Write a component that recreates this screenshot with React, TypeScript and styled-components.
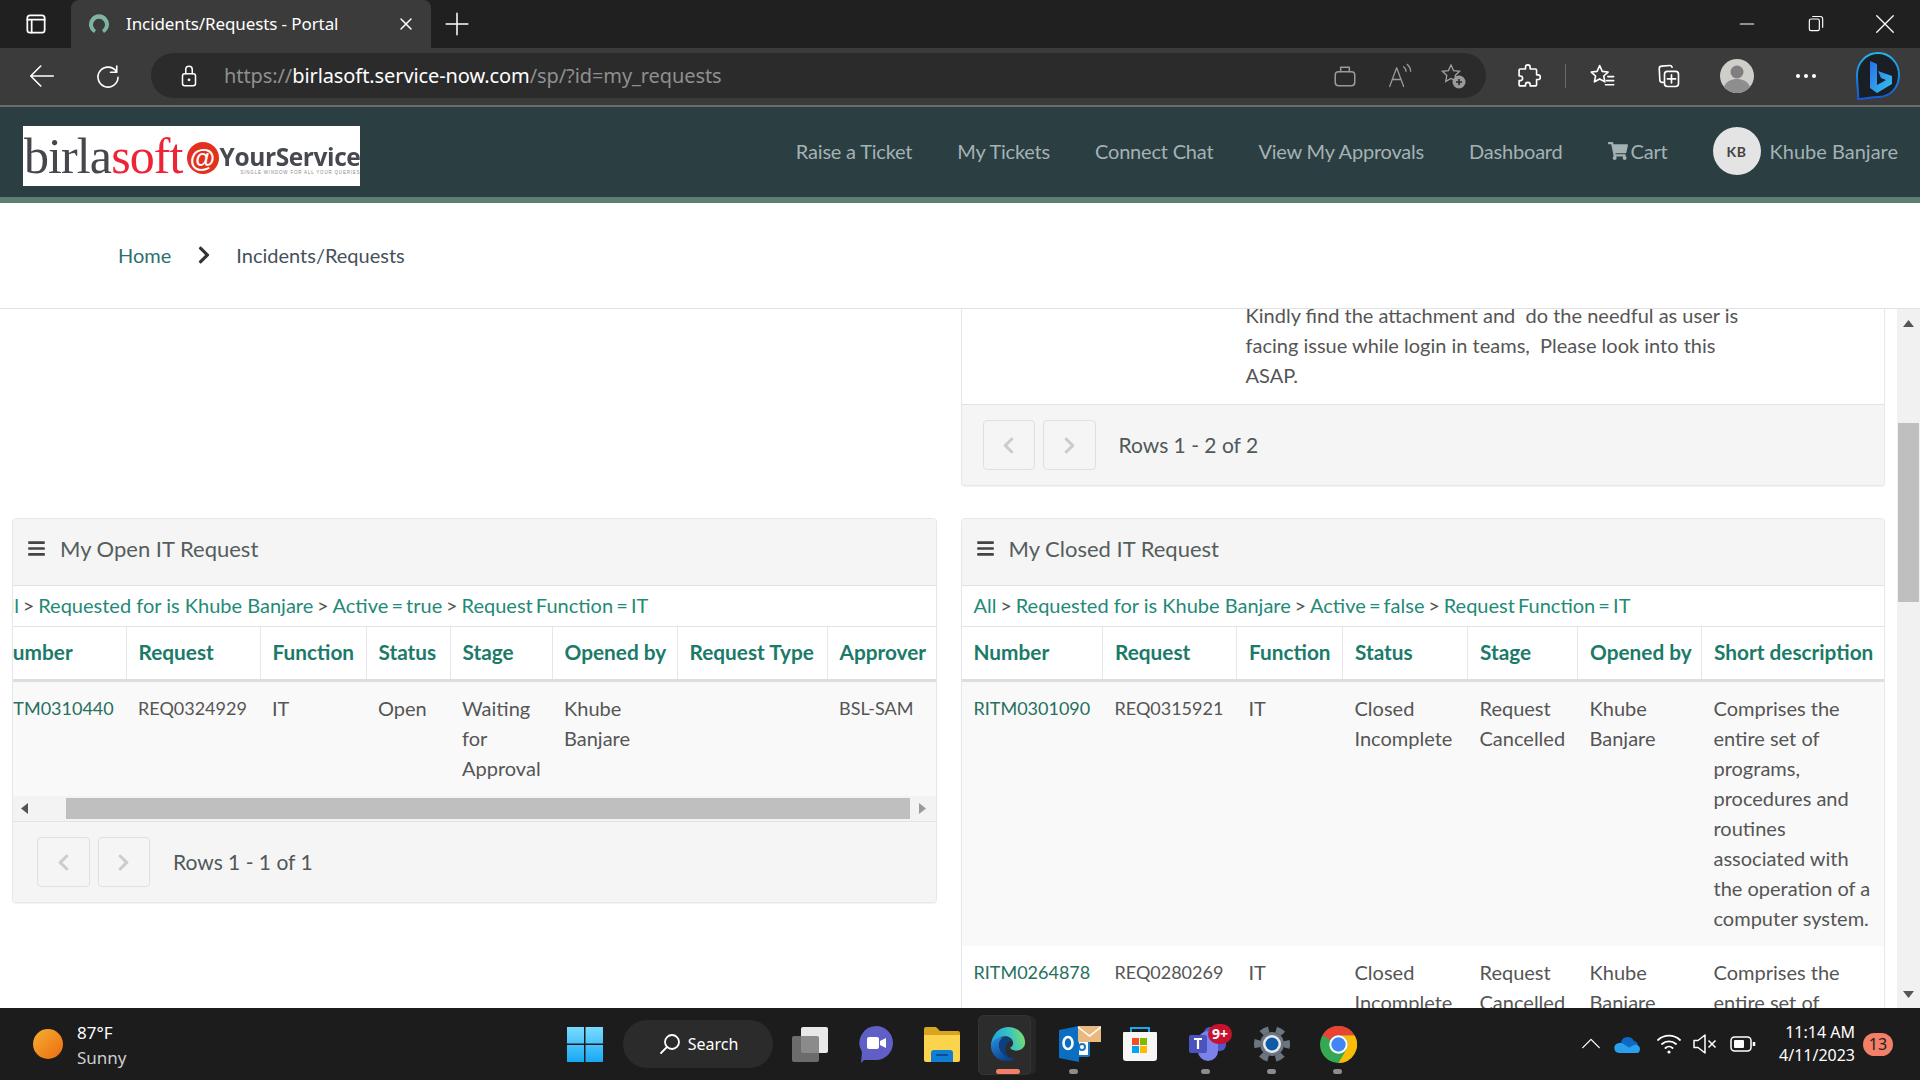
import React, { FC, ReactNode } from 'react';
import styled, { createGlobalStyle } from 'styled-components';
import { FaBars, FaChevronLeft, FaChevronRight, FaShoppingCart } from 'react-icons/fa';

const PAGE_FONT = '"Lato", "Noto Sans", sans-serif';
const UI_FONT = '"Noto Sans", "Open Sans", sans-serif';

const GlobalStyle = createGlobalStyle`
  html, body {
    margin: 0;
    height: 100%;
    overflow: hidden;
    background: #fff;
  }
  * { box-sizing: border-box; }
`;

const Styled = {
  App: styled.div`
    display: flex;
    flex-direction: column;
    width: 1920px;
    height: 1080px;
    overflow: hidden;
    font-family: ${PAGE_FONT};
    color: #545c5c;
  `,
  TabBar: styled.div`
    display: flex;
    align-items: stretch;
    flex: 0 0 48px;
    background: #202020;
    color: #fff;
    font-family: ${UI_FONT};
  `,
  TabSlot: styled.div<{ $w: number }>`
    display: flex;
    align-items: center;
    justify-content: center;
    flex: 0 0 ${(p) => p.$w}px;
  `,
  Tab: styled.div`
    display: flex;
    align-items: center;
    flex: 0 0 360px;
    padding: 0 15px 0 16px;
    background: #3b3b3b;
    border-radius: 8px 8px 0 0;
  `,
  TabTitle: styled.span`
    flex: 1;
    margin: 0 0 2px 15px;
    font-size: 17px;
    letter-spacing: -0.1px;
    white-space: nowrap;
  `,
  Spacer: styled.div`
    flex: 1;
  `,
  Toolbar: styled.div`
    display: flex;
    align-items: center;
    flex: 0 0 59px;
    padding: 0 0 2px 9px;
    background: #3b3b3b;
    border-bottom: 2px solid #6b6b6b;
  `,
  ToolSlot: styled.div<{ $w: number }>`
    display: flex;
    align-items: center;
    justify-content: center;
    flex: 0 0 ${(p) => p.$w}px;
    height: 45px;
  `,
  AddressBar: styled.div`
    display: flex;
    align-items: center;
    flex: 0 0 1335px;
    height: 45px;
    margin: 0 10px;
    padding: 0 6px 0 22px;
    background: #2b2b2b;
    border-radius: 23px;
  `,
  Url: styled.div`
    flex: 1;
    margin-left: 19px;
    font-family: ${UI_FONT};
    font-size: 20px;
    letter-spacing: -0.09px;
    color: #8f8f8f;
    white-space: nowrap;
    b {
      font-weight: 400;
      color: #fff;
    }
  `,
  Divider: styled.div`
    width: 1px;
    height: 24px;
    background: #6a6a6a;
  `,
  Header: styled.header`
    display: flex;
    align-items: center;
    justify-content: space-between;
    flex: 0 0 96px;
    padding: 0 22px 0 23px;
    background: #2b3e42;
    border-bottom: 6px solid #5b7f71;
  `,
  Logo: styled.div`
    display: flex;
    align-items: center;
    width: 337px;
    height: 60px;
    margin-top: 8px;
    padding-left: 1px;
    background: #fff;
    overflow: hidden;
  `,
  LogoWord: styled.span<{ $c: string }>`
    font-family: 'Liberation Serif', serif;
    font-size: 50px;
    line-height: 50px;
    letter-spacing: -0.9px;
    color: ${(p) => p.$c};
    filter: blur(0.3px);
  `,
  LogoAt: styled.span`
    display: flex;
    align-items: center;
    justify-content: center;
    flex: 0 0 32px;
    height: 32px;
    margin: 4px 1px 0 4px;
    border-radius: 50%;
    background: #e2321f;
    color: #fff;
    font-family: 'Liberation Sans', sans-serif;
    font-size: 26px;
    font-weight: 700;
    line-height: 1;
  `,
  LogoRight: styled.div`
    display: flex;
    flex-direction: column;
    align-items: flex-end;
    margin-top: 6px;
  `,
  LogoService: styled.span`
    font-family: 'Open Sans', sans-serif;
    font-size: 24.5px;
    font-weight: 700;
    line-height: 26px;
    letter-spacing: -0.4px;
    color: #46494f;
    white-space: nowrap;
    filter: blur(0.3px);
  `,
  LogoTag: styled.span`
    font-family: 'Liberation Sans', sans-serif;
    font-size: 4.5px;
    line-height: 5px;
    letter-spacing: 0.8px;
    color: #8a8a8a;
    white-space: nowrap;
  `,
  Nav: styled.nav`
    display: flex;
    align-items: center;
    gap: 45px;
    margin-bottom: 2px;
    font-size: 20px;
    letter-spacing: -0.2px;
    color: #a4b2b4;
  `,
  NavLink: styled.a`
    display: flex;
    align-items: center;
    gap: 3px;
    white-space: nowrap;
  `,
  User: styled.div`
    display: flex;
    align-items: center;
    gap: 9px;
    letter-spacing: 0;
    white-space: nowrap;
  `,
  Avatar: styled.span`
    display: flex;
    align-items: center;
    justify-content: center;
    width: 48px;
    height: 48px;
    border-radius: 50%;
    background: #e4e4e4;
    color: #444;
    font-size: 14px;
    font-weight: 700;
    letter-spacing: 0.5px;
  `,
  Crumbs: styled.div`
    display: flex;
    align-items: center;
    flex: 0 0 106px;
    padding: 0 0 1px 118px;
    border-bottom: 1px solid #e2e2e2;
    font-size: 20px;
  `,
  CrumbHome: styled.a`
    color: #2c6f72;
  `,
  CrumbArrow: styled.span`
    display: flex;
    justify-content: center;
    width: 65px;
    color: #333;
    font-size: 20px;
  `,
  CrumbCurrent: styled.span`
    color: #46505a;
  `,
  Main: styled.main`
    display: flex;
    flex: 1;
    min-height: 0;
  `,
  Scroll: styled.div`
    display: grid;
    grid-template-columns: minmax(0, 1fr) minmax(0, 1fr);
    column-gap: 24px;
    align-items: start;
    flex: 1;
    padding: 0 12px 0 12px;
    overflow: hidden;
  `,
  LeftColumn: styled.div`
    padding-top: 209px;
  `,
  RightColumn: styled.div`
    display: flex;
    flex-direction: column;
    gap: 32px;
  `,
  Panel: styled.section<{ $cut?: boolean }>`
    border: 1px solid #e4e8e7;
    border-top-width: ${(p) => (p.$cut ? 0 : 1)}px;
    border-radius: ${(p) => (p.$cut ? '0 0 4px 4px' : '4px')};
    box-shadow: 0 1px 1px rgba(0, 0, 0, 0.05);
    background: #fff;
    overflow: hidden;
  `,
  PanelHead: styled.div`
    display: flex;
    align-items: center;
    gap: 14px;
    height: 67px;
    padding: 0 0 7px 14px;
    background: #f5f5f5;
    border-bottom: 1px solid #e2e4e4;
    font-size: 22px;
    color: #555d5d;
    svg {
      color: #444;
      font-size: 19px;
    }
  `,
  Filter: styled.div<{ $scrolled?: boolean }>`
    height: 40px;
    padding-left: 12px;
    margin-left: ${(p) => (p.$scrolled ? -29 : 0)}px;
    font-size: 20px;
    line-height: 38px;
    white-space: pre;
    word-spacing: -1.3px;
    color: #555;
    a {
      color: #1f8a76;
      word-spacing: 0;
    }
    a:nth-of-type(n + 3) {
      word-spacing: -2px;
    }
  `,
  TableClip: styled.div`
    overflow: hidden;
  `,
  Table: styled.table<{ $width: number; $scrolled?: boolean }>`
    table-layout: fixed;
    width: ${(p) => p.$width}px;
    border-collapse: collapse;
    margin-left: ${(p) => (p.$scrolled ? -28 : 0)}px;
  `,
  Th: styled.th<{ $w: number }>`
    width: ${(p) => p.$w}px;
    height: 54px;
    padding: 0 0 3px 12px;
    border-top: 1px solid #e2e4e4;
    border-left: 1px solid #e6e8e8;
    border-bottom: 3px solid #dedede;
    font-size: 20.8px;
    font-weight: 700;
    text-align: left;
    white-space: nowrap;
    color: #1c7a68;
    &:first-child {
      border-left: 0;
    }
  `,
  Row: styled.tr<{ $odd?: boolean }>`
    background: ${(p) => (p.$odd ? '#f9f9f9' : '#fff')};
    & + & td {
      border-top: 2px solid #e4e4e4;
    }
  `,
  Td: styled.td<{ $code?: boolean }>`
    padding: 11px 6px 13px 12px;
    vertical-align: top;
    font-size: ${(p) => (p.$code ? 18 : 20)}px;
    line-height: 30px;
    white-space: ${(p) => (p.$code ? 'nowrap' : 'normal')};
    color: #555;
    a {
      color: #26705f;
    }
  `,
  HScroll: styled.div`
    display: flex;
    align-items: center;
    height: 25px;
    padding: 2px 0;
    background: #f3f3f3;
  `,
  HArrow: styled.span<{ $w: number; $right?: boolean }>`
    display: flex;
    justify-content: center;
    flex: 0 0 ${(p) => p.$w}px;
    padding-right: ${(p) => (p.$right ? 0 : 30)}px;
  `,
  HThumb: styled.div`
    flex: 1;
    height: 21px;
    background: #bfbfbf;
  `,
  Footer: styled.div<{ $inset: number }>`
    display: flex;
    align-items: center;
    gap: 8px;
    height: 81px;
    padding: 0 0 0 ${(p) => p.$inset}px;
    background: #f5f5f5;
    border-top: 1px solid #e2e4e4;
  `,
  PageButton: styled.span`
    display: flex;
    align-items: center;
    justify-content: center;
    width: 52.5px;
    height: 50px;
    border: 1px solid #e0e0e0;
    border-radius: 4px;
    color: #ccc;
    font-size: 19px;
  `,
  Rows: styled.span`
    margin: 0 0 2px 15px;
    font-size: 21px;
    color: #50585a;
  `,
  Description: styled.div`
    height: 95px;
    overflow: hidden;
  `,
  DescriptionText: styled.p`
    margin: -9px 0 0 284px;
    font-size: 20px;
    line-height: 30px;
    color: #555;
    white-space: pre;
  `,
  VScroll: styled.div`
    display: flex;
    flex-direction: column;
    align-items: center;
    flex: 0 0 23px;
    background: #f1f1f1;
  `,
  VArrow: styled.div`
    display: flex;
    align-items: center;
    justify-content: center;
    flex: 0 0 28px;
  `,
  VThumb: styled.div`
    width: 21px;
    height: 179px;
    margin-top: 86px;
    background: #bfbfbf;
  `,
  VGap: styled.div`
    flex: 1;
  `,
  Taskbar: styled.footer`
    display: flex;
    align-items: center;
    flex: 0 0 72px;
    background: #1c1c1c;
    color: #fff;
    font-family: ${UI_FONT};
  `,
  Weather: styled.div`
    display: flex;
    align-items: center;
    gap: 14px;
    flex: 0 0 552px;
    padding-left: 33px;
  `,
  Sun: styled.span`
    width: 30px;
    height: 30px;
    border-radius: 50%;
    background: linear-gradient(135deg, #f2b133, #f0690f);
  `,
  WeatherText: styled.div`
    padding-top: 2px;
    font-size: 17px;
    line-height: 25px;
    color: #fff;
    span {
      display: block;
      color: #cfcfcf;
    }
  `,
  Search: styled.div`
    display: flex;
    align-items: center;
    justify-content: center;
    gap: 6px;
    flex: 0 0 150px;
    height: 48px;
    margin: 0 4px 0 5px;
    border-radius: 24px;
    background: #2b2b2b;
    font-size: 16px;
  `,
  TaskSlot: styled.div<{ $active?: boolean; $dot?: boolean; $shift?: number }>`
    position: relative;
    display: flex;
    align-items: center;
    justify-content: center;
    flex: 0 0 66px;
    height: 72px;
    padding-left: ${(p) => p.$shift || 0}px;
    &:before {
      content: '';
      display: ${(p) => (p.$active ? 'block' : 'none')};
      position: absolute;
      top: 7px;
      left: 3px;
      width: 53px;
      height: 60px;
      border-radius: 6px;
      background: #2c2c2c;
      box-shadow: inset 0 0 0 1px #333, 6px 0 0 -1px #262626;
    }
    &:after {
      content: '';
      display: ${(p) => (p.$active || p.$dot ? 'block' : 'none')};
      position: absolute;
      left: ${(p) => (p.$active ? 21 : 28)}px;
      bottom: 6px;
      width: ${(p) => (p.$active ? 24 : 9)}px;
      height: 5px;
      border-radius: 3px;
      background: ${(p) => (p.$active ? '#f27f66' : '#8c8c8c')};
    }
    svg {
      position: relative;
      z-index: 1;
    }
  `,
  TeamsBadge: styled.span`
    position: absolute;
    top: 16px;
    right: 7px;
    z-index: 2;
    display: flex;
    align-items: center;
    justify-content: center;
    width: 24px;
    height: 20px;
    border-radius: 10px;
    background: #c4122f;
    font-size: 14px;
    font-weight: 700;
    line-height: 1;
  `,
  Tray: styled.div`
    display: flex;
    align-items: center;
    margin-left: auto;
    padding-right: 27px;
  `,
  TraySlot: styled.div<{ $w: number }>`
    display: flex;
    align-items: center;
    justify-content: center;
    flex: 0 0 ${(p) => p.$w}px;
  `,
  Clock: styled.div`
    flex: 0 0 86px;
    font-size: 16px;
    line-height: 23px;
    text-align: right;
    white-space: nowrap;
  `,
  Badge: styled.span`
    display: flex;
    align-items: center;
    justify-content: center;
    width: 30px;
    height: 23px;
    margin-left: 8px;
    border-radius: 12px;
    background: #f27f66;
    color: #222;
    font-size: 16px;
  `,
};

const Stroke: FC<{ size?: number; color?: string; children: ReactNode }> = ({ size = 24, color = '#fff', children }) => (
  <svg width={size} height={size} viewBox="0 0 24 24" fill="none" stroke={color} strokeWidth={1.4} strokeLinecap="round" strokeLinejoin="round">
    {children}
  </svg>
);

const STAR = 'M12 3l2.6 5.6 6 .7-4.4 4.1 1.1 6L12 16.5 6.700 19.400l1.100-6L3.400 9.300l6-.7z';

const EdgeIcon: FC = () => (
  <svg width="38" height="38" viewBox="0 0 40 40">
    <defs>
      <linearGradient id="edgeTop" x1="0" y1="0.6" x2="1" y2="0.4">
        <stop offset="0" stopColor="#1f9fd8" />
        <stop offset="0.55" stopColor="#35c1c8" />
        <stop offset="1" stopColor="#78e06a" />
      </linearGradient>
      <linearGradient id="edgeLow" x1="0" y1="0" x2="0.6" y2="1">
        <stop offset="0" stopColor="#2a8fe0" />
        <stop offset="1" stopColor="#0b3f8a" />
      </linearGradient>
    </defs>
    <path d="M20 2C30 2 38 9.500 38 18.500 38 24 33.500 27 28.500 27 25.500 27 22.500 25.800 22.500 23.500 25 22.500 26 20 25 17 23 12 17 10.500 12 13 7 15.500 3.500 19 2 22 2.500 11 10 2 20 2Z" fill="url(#edgeTop)" />
    <path d="M2 22C4 16 9 12.500 15.500 13 11.500 15 10 19 11 24 12.500 31 20 36 27.500 34.500 25 37 22 38 19 38 9.500 38 2 31 2 22Z" fill="url(#edgeLow)" />
    <path d="M15.500 13C11.500 15 10 19 11 24 12 29 16 33 21 34.500 17 30 16.500 25 18 21.500 19 19 21 16.500 25 17 23 13.500 19.500 12.500 15.500 13Z" fill="#0e3f82" />
  </svg>
);

const OutlookIcon: FC = () => (
  <svg width="44" height="36" viewBox="0 0 44 36">
    <rect x="18" y="14" width="14" height="16" rx="1" fill="#fff" stroke="#1a77c4" strokeWidth="2" />
    <circle cx="25" cy="21" r="3" fill="none" stroke="#1a77c4" strokeWidth="2" />
    <path d="M2 4l20-4v36L2 32z" fill="#0a6fc2" />
    <ellipse cx="11" cy="17" rx="4.500" ry="6" fill="none" stroke="#fff" strokeWidth="2.600" />
    <rect x="21" y="0" width="23" height="16" fill="#e9b97f" />
    <path d="M21 1l11.500 9L44 1" fill="none" stroke="#fff" strokeWidth="1.500" />
  </svg>
);

const StoreIcon: FC = () => (
  <svg width="36" height="36" viewBox="0 0 36 36">
    <path d="M9 7V2h18v5" fill="none" stroke="#1aa9e8" strokeWidth="2" />
    <path d="M2 6h32a1 1 0 0 1 1 1v25a3 3 0 0 1-3 3H4a3 3 0 0 1-3-3V7a1 1 0 0 1 1-1z" fill="#f6f6f6" />
    <rect x="10" y="12" width="7" height="7" fill="#f25022" />
    <rect x="18" y="12" width="7" height="7" fill="#7fba00" />
    <rect x="10" y="20" width="7" height="7" fill="#00a4ef" />
    <rect x="18" y="20" width="7" height="7" fill="#ffb900" />
  </svg>
);

const TeamsIcon: FC = () => (
  <svg width="40" height="38" viewBox="0 0 40 38">
    <rect x="16" y="2" width="22" height="24" rx="6" fill="#5059c9" />
    <rect x="10" y="6" width="20" height="30" rx="10" fill="#7b83eb" />
    <rect x="1" y="10" width="18" height="18" rx="2" fill="#4b53bc" />
    <path d="M6 14h8M10 14v10" stroke="#fff" strokeWidth="2.200" fill="none" />
  </svg>
);

const GearIcon: FC = () => (
  <svg width="38" height="38" viewBox="0 0 38 38">
    <circle cx="19" cy="19" r="12" fill="#6c7680" />
    <circle cx="19" cy="19" r="15" fill="none" stroke="#6c7680" strokeWidth="6" strokeDasharray="8 7.700" strokeDashoffset="4" />
    <circle cx="19" cy="19" r="9" fill="#e8eaec" />
    <circle cx="19" cy="19" r="6.500" fill="#0f5ba8" />
  </svg>
);

const ChromeIcon: FC = () => (
  <svg width="37" height="37" viewBox="6 6 36 36">
    <circle cx="24" cy="24" r="18" fill="#34a853" />
    <path d="M39.600 15A18 18 0 0 1 24 42l7.800-13.500A9 9 0 0 0 24 15z" fill="#fbbc05" />
    <path d="M8.400 15a18 18 0 0 1 31.200 0H24a9 9 0 0 0-7.800 4.500z" fill="#ea4335" />
    <circle cx="24" cy="24" r="9" fill="#fff" />
    <circle cx="24" cy="24" r="7" fill="#4285f4" />
  </svg>
);

const BingIcon: FC = () => (
  <svg width="46" height="50" viewBox="0 0 46 50">
    <defs>
      <linearGradient id="bingRing" x1="0.500" y1="0" x2="0.500" y2="1">
        <stop offset="0" stopColor="#22b8e8" />
        <stop offset="1" stopColor="#1358d8" />
      </linearGradient>
      <linearGradient id="bingB" x1="0" y1="0" x2="1" y2="1">
        <stop offset="0" stopColor="#2a6fe8" />
        <stop offset="1" stopColor="#36c3ee" />
      </linearGradient>
    </defs>
    <path d="M23 2C34 2 44 11 44 24 44 37 35 46 23 46 16 46 10 48 3 48 4 44 2 38 2 24 2 11 12 2 23 2Z" fill="#1a1f26" stroke="url(#bingRing)" strokeWidth="2" />
    <path d="M15 10l7 3v21l9-5-5-2-3-7 14 5v8L22 42l-7-5z" fill="url(#bingB)" />
  </svg>
);

const OpenColumns = [
  { title: 'Number', w: 141 },
  { title: 'Request', w: 134 },
  { title: 'Function', w: 106 },
  { title: 'Status', w: 84 },
  { title: 'Stage', w: 102 },
  { title: 'Opened by', w: 125 },
  { title: 'Request Type', w: 150 },
  { title: 'Approver', w: 111 },
];

const ClosedColumns = [
  { title: 'Number', w: 141 },
  { title: 'Request', w: 134 },
  { title: 'Function', w: 106 },
  { title: 'Status', w: 125 },
  { title: 'Stage', w: 110 },
  { title: 'Opened by', w: 124 },
  { title: 'Short description', w: 183 },
];

const DESCRIPTION = 'Comprises the entire set of programs, procedures and routines associated with the operation of a computer system.';

const ClosedRows = [
  { number: 'RITM0301090', request: 'REQ0315921' },
  { number: 'RITM0264878', request: 'REQ0280269' },
];

const Pager: FC<{ label: string; inset: number }> = ({ label, inset }) => (
  <Styled.Footer $inset={inset}>
    <Styled.PageButton>
      <FaChevronLeft />
    </Styled.PageButton>
    <Styled.PageButton>
      <FaChevronRight />
    </Styled.PageButton>
    <Styled.Rows>{label}</Styled.Rows>
  </Styled.Footer>
);

const BrowserChrome: FC = () => (
  <>
    <Styled.TabBar>
      <Styled.TabSlot $w={71}>
        <Stroke size={26}>
          <rect x="4" y="4" width="16" height="16" rx="2.500" strokeWidth="1.600" />
          <path d="M4 8h16M8 8v12" strokeWidth="1.600" />
        </Stroke>
      </Styled.TabSlot>
      <Styled.Tab>
        <svg width="24" height="24" viewBox="0 0 24 24">
          <path d="M7 21A10 10 0 1 1 17 21L15 18A6 6 0 1 0 9 18Z" fill="#7db5a0" />
        </svg>
        <Styled.TabTitle>Incidents/Requests - Portal</Styled.TabTitle>
        <Stroke size={20}>
          <path d="M6 6l12 12M18 6L6 18" strokeWidth="1.800" />
        </Stroke>
      </Styled.Tab>
      <Styled.TabSlot $w={52}>
        <Stroke size={26}>
          <path d="M12 2v20M2 12h20" />
        </Stroke>
      </Styled.TabSlot>
      <Styled.Spacer />
      <Styled.TabSlot $w={69}>
        <Stroke size={20}>
          <path d="M4 12h16" />
        </Stroke>
      </Styled.TabSlot>
      <Styled.TabSlot $w={69}>
        <Stroke size={20}>
          <rect x="4" y="6" width="12" height="14" rx="2" />
          <path d="M8 3h9a3 3 0 0 1 3 3v10" />
        </Stroke>
      </Styled.TabSlot>
      <Styled.TabSlot $w={70}>
        <Stroke size={22}>
          <path d="M3 3l18 18M21 3L3 21" />
        </Stroke>
      </Styled.TabSlot>
    </Styled.TabBar>
    <Styled.Toolbar>
      <Styled.ToolSlot $w={66}>
        <Stroke size={30}>
          <path d="M21 12H3M11 4l-8 8 8 8" strokeWidth="1.300" />
        </Stroke>
      </Styled.ToolSlot>
      <Styled.ToolSlot $w={66}>
        <Stroke size={30}>
          <path d="M19 4v5h-5M19 9a8 8 0 1 0 1 4" strokeWidth="1.300" />
        </Stroke>
      </Styled.ToolSlot>
      <Styled.AddressBar>
        <Styled.ToolSlot $w={32}>
          <Stroke size={26}>
            <rect x="6" y="10" width="12" height="11" rx="2" />
            <path d="M9 10V6a3 3 0 0 1 6 0v4" />
            <circle cx="12" cy="15.500" r="0.600" fill="#fff" />
          </Stroke>
        </Styled.ToolSlot>
        <Styled.Url>
          https://<b>birlasoft.service-now.com</b>/sp/?id=my_requests
        </Styled.Url>
        <Styled.ToolSlot $w={54}>
          <Stroke size={26} color="#9a9a9a">
            <rect x="3" y="8" width="18" height="13" rx="3" />
            <path d="M8 8V4h8v4" />
          </Stroke>
        </Styled.ToolSlot>
        <Styled.ToolSlot $w={54}>
          <Stroke size={28} color="#9a9a9a">
            <path d="M4 21l6-16 6 16M6.500 15h7M16 4c1.500 1.200 2 2.600 2 4M19 2c2 1.800 3 3.800 3 6" strokeWidth="1.100" />
          </Stroke>
        </Styled.ToolSlot>
        <Styled.ToolSlot $w={54}>
          <svg width="28" height="28" viewBox="0 0 28 28" fill="none">
            <path d={STAR} stroke="#a0a0a0" strokeWidth="1.300" />
            <circle cx="20" cy="20" r="6.500" fill="#9a9a9a" />
            <path d="M20 17v6M17 20h6" stroke="#2b2b2b" strokeWidth="1.600" />
          </svg>
        </Styled.ToolSlot>
      </Styled.AddressBar>
      <Styled.ToolSlot $w={66}>
        <Stroke size={28}>
          <path d="M9 4.500C9 3 10 2.500 11 2.500s2 .8 2 2V6h4.500a1 1 0 0 1 1 1v4h1.200c1.300 0 2 1 2 2s-.8 2-2 2h-1.200v4.500a1 1 0 0 1-1 1H13v-1c0-1.300-1-2-2-2s-2 .8-2 2v1H4.500a1 1 0 0 1-1-1V16h1c1.300 0 2-1 2-2s-.8-2-2-2h-1V7a1 1 0 0 1 1-1H9z" />
        </Stroke>
      </Styled.ToolSlot>
      <Styled.ToolSlot $w={7}>
        <Styled.Divider />
      </Styled.ToolSlot>
      <Styled.ToolSlot $w={66}>
        <Stroke size={28}>
          <path d="M10 3l2.200 5 5 .6-3.700 3.400 1 5L10 14.500 5.500 17l1-5-3.700-3.400 5-.6z" />
          <path d="M17 12.500h5M16 16h6M15 19.500h7" />
        </Stroke>
      </Styled.ToolSlot>
      <Styled.ToolSlot $w={66}>
        <Stroke size={28}>
          <path d="M8 17.500H7a2 2 0 0 1-2-2L4.500 5.500a2 2 0 0 1 2-2l7-.5a2 2 0 0 1 2 1.500" />
          <rect x="9" y="8" width="12" height="13" rx="2.500" />
          <path d="M15 11v7M11.500 14.500h7" />
        </Stroke>
      </Styled.ToolSlot>
      <Styled.ToolSlot $w={72}>
        <svg width="34" height="34" viewBox="0 0 34 34">
          <circle cx="17" cy="17" r="17" fill="#d0cec9" />
          <circle cx="17" cy="13" r="6.500" fill="#7f7f7f" />
          <path d="M4 28c2-6 8-8 13-8s11 2 13 8a17 17 0 0 1-26 0z" fill="#8e8e8e" />
        </svg>
      </Styled.ToolSlot>
      <Styled.ToolSlot $w={66}>
        <svg width="22" height="6" viewBox="0 0 22 6" fill="#fff">
          <circle cx="3" cy="3" r="2" />
          <circle cx="11" cy="3" r="2" />
          <circle cx="19" cy="3" r="2" />
        </svg>
      </Styled.ToolSlot>
      <Styled.ToolSlot $w={78}>
        <BingIcon />
      </Styled.ToolSlot>
    </Styled.Toolbar>
  </>
);

const SiteHeader: FC = () => (
  <Styled.Header>
    <Styled.Logo>
      <Styled.LogoWord $c="#45474d">birla</Styled.LogoWord>
      <Styled.LogoWord $c="#ee2436">soft</Styled.LogoWord>
      <Styled.LogoAt>@</Styled.LogoAt>
      <Styled.LogoRight>
        <Styled.LogoService>YourService</Styled.LogoService>
        <Styled.LogoTag>SINGLE WINDOW FOR ALL YOUR QUERIES</Styled.LogoTag>
      </Styled.LogoRight>
    </Styled.Logo>
    <Styled.Nav>
      <Styled.NavLink>Raise a Ticket</Styled.NavLink>
      <Styled.NavLink>My Tickets</Styled.NavLink>
      <Styled.NavLink>Connect Chat</Styled.NavLink>
      <Styled.NavLink>View My Approvals</Styled.NavLink>
      <Styled.NavLink>Dashboard</Styled.NavLink>
      <Styled.NavLink>
        <FaShoppingCart size={20} />
        Cart
      </Styled.NavLink>
      <Styled.User>
        <Styled.Avatar>KB</Styled.Avatar>
        Khube Banjare
      </Styled.User>
    </Styled.Nav>
  </Styled.Header>
);

const OpenPanel: FC = () => (
  <Styled.Panel>
    <Styled.PanelHead>
      <FaBars />
      My Open IT Request
    </Styled.PanelHead>
    <Styled.TableClip>
      <Styled.Filter $scrolled>
        <a>All</a> {'> '}<a>Requested for is Khube Banjare</a> {'> '}<a>Active = true</a> {'> '}<a>Request Function = IT</a>
      </Styled.Filter>
      <Styled.Table $scrolled $width={953}>
        <thead>
          <tr>
            {OpenColumns.map((column) => (
              <Styled.Th key={column.title} $w={column.w}>
                {column.title}
              </Styled.Th>
            ))}
          </tr>
        </thead>
        <tbody>
          <Styled.Row $odd>
            <Styled.Td $code>
              <a>RITM0310440</a>
            </Styled.Td>
            <Styled.Td $code>REQ0324929</Styled.Td>
            <Styled.Td>IT</Styled.Td>
            <Styled.Td>Open</Styled.Td>
            <Styled.Td>Waiting for Approval</Styled.Td>
            <Styled.Td>Khube Banjare</Styled.Td>
            <Styled.Td />
            <Styled.Td $code>BSL-SAM</Styled.Td>
          </Styled.Row>
        </tbody>
      </Styled.Table>
    </Styled.TableClip>
    <Styled.HScroll>
      <Styled.HArrow $w={53}>
        <svg width="7" height="11" viewBox="0 0 7 11" fill="#555">
          <path d="M7 0v11L0 5.500z" />
        </svg>
      </Styled.HArrow>
      <Styled.HThumb />
      <Styled.HArrow $w={26} $right>
        <svg width="7" height="11" viewBox="0 0 7 11" fill="#9a9a9a">
          <path d="M0 0v11l7-5.500z" />
        </svg>
      </Styled.HArrow>
    </Styled.HScroll>
    <Pager label="Rows 1 - 1 of 1" inset={24} />
  </Styled.Panel>
);

const ClosedPanel: FC = () => (
  <Styled.Panel>
    <Styled.PanelHead>
      <FaBars />
      My Closed IT Request
    </Styled.PanelHead>
    <Styled.Filter>
      <a>All</a> {'> '}<a>Requested for is Khube Banjare</a> {'> '}<a>Active = false</a> {'> '}<a>Request Function = IT</a>
    </Styled.Filter>
    <Styled.Table $width={923}>
      <thead>
        <tr>
          {ClosedColumns.map((column) => (
            <Styled.Th key={column.title} $w={column.w}>
              {column.title}
            </Styled.Th>
          ))}
        </tr>
      </thead>
      <tbody>
        {ClosedRows.map((row, index) => (
          <Styled.Row key={row.number} $odd={index === 0}>
            <Styled.Td $code>
              <a>{row.number}</a>
            </Styled.Td>
            <Styled.Td $code>{row.request}</Styled.Td>
            <Styled.Td>IT</Styled.Td>
            <Styled.Td>Closed Incomplete</Styled.Td>
            <Styled.Td>Request Cancelled</Styled.Td>
            <Styled.Td>Khube Banjare</Styled.Td>
            <Styled.Td>{DESCRIPTION}</Styled.Td>
          </Styled.Row>
        ))}
      </tbody>
    </Styled.Table>
  </Styled.Panel>
);

const Taskbar: FC = () => (
  <Styled.Taskbar>
    <Styled.Weather>
      <Styled.Sun />
      <Styled.WeatherText>
        87°F
        <span>Sunny</span>
      </Styled.WeatherText>
    </Styled.Weather>
    <Styled.TaskSlot>
      <svg width="36" height="36" viewBox="0 0 36 36">
        <defs>
          <linearGradient id="winTop" x1="0" y1="0" x2="0" y2="1">
            <stop offset="0" stopColor="#7adcff" />
            <stop offset="1" stopColor="#18a8f5" />
          </linearGradient>
        </defs>
        <path d="M0 1h17v16.500H0zM18.500 1H36v16.500H18.500zM0 19h17v17H0zM18.500 19H36v17H18.500z" fill="url(#winTop)" />
      </svg>
    </Styled.TaskSlot>
    <Styled.Search>
      <svg width="24" height="24" viewBox="0 0 24 24" fill="none" stroke="#fff" strokeWidth="1.800" strokeLinecap="round">
        <circle cx="14" cy="10" r="7" />
        <path d="M9 15l-6 6" />
      </svg>
      Search
    </Styled.Search>
    <Styled.TaskSlot>
      <svg width="36" height="36" viewBox="0 0 36 36">
        <rect x="9" y="1" width="27" height="26" rx="2" fill="#e8e8e8" />
        <rect x="0" y="10" width="27" height="26" rx="2" fill="#7a7a7a" fillOpacity="0.85" />
      </svg>
    </Styled.TaskSlot>
    <Styled.TaskSlot>
      <svg width="36" height="38" viewBox="0 0 36 38">
        <path d="M18 1a17 17 0 0 1 0 34H6l-3 3 1-11A17 17 0 0 1 18 1z" fill="#5f5fc6" />
        <rect x="9" y="12" width="12" height="12" rx="2" fill="#fff" />
        <path d="M22 16l6-3v10l-6-3z" fill="#fff" />
      </svg>
    </Styled.TaskSlot>
    <Styled.TaskSlot>
      <svg width="36" height="36" viewBox="0 0 36 36">
        <path d="M0 3a2 2 0 0 1 2-2h10l4 4h18a2 2 0 0 1 2 2v5H0z" fill="#d9a520" />
        <path d="M0 9h36v25a2 2 0 0 1-2 2H2a2 2 0 0 1-2-2z" fill="#fcd34d" />
        <path d="M7 27a3 3 0 0 1 3-3h16a3 3 0 0 1 3 3v9H7z" fill="#0f7fd6" />
        <path d="M12 29h12" stroke="#0a4e96" strokeWidth="2" />
      </svg>
    </Styled.TaskSlot>
    <Styled.TaskSlot $active>
      <EdgeIcon />
    </Styled.TaskSlot>
    <Styled.TaskSlot $dot $shift={10}>
      <OutlookIcon />
    </Styled.TaskSlot>
    <Styled.TaskSlot>
      <StoreIcon />
    </Styled.TaskSlot>
    <Styled.TaskSlot $dot $shift={4}>
      <TeamsIcon />
      <Styled.TeamsBadge>9+</Styled.TeamsBadge>
    </Styled.TaskSlot>
    <Styled.TaskSlot $dot>
      <GearIcon />
    </Styled.TaskSlot>
    <Styled.TaskSlot $dot>
      <ChromeIcon />
    </Styled.TaskSlot>
    <Styled.Tray>
      <Styled.TraySlot $w={36}>
        <Stroke size={22}>
          <path d="M3 16l9-9 9 9" />
        </Stroke>
      </Styled.TraySlot>
      <Styled.TraySlot $w={36}>
        <svg width="26" height="18" viewBox="0 0 26 18">
          <path d="M7 7a7 7 0 0 1 13-1 5 5 0 0 1 4 4L12 14z" fill="#0f68c4" />
          <path d="M5 18a5 5 0 0 1-1-9.800C7 7 9 8 11 10l4 2.500L20 10c3-1 6 1 6 4 0 2-1 4-3 4z" fill="#2aa0ec" />
        </svg>
      </Styled.TraySlot>
      <Styled.TraySlot $w={48}>
        <svg width="24" height="22" viewBox="0 0 24 22" fill="none" stroke="#fff" strokeWidth="1.800" strokeLinecap="round">
          <path d="M1 7a16 16 0 0 1 22 0M5 11a10.500 10.500 0 0 1 14 0M8.500 15a5 5 0 0 1 7 0" />
          <circle cx="12" cy="19" r="1.600" fill="#fff" stroke="none" />
        </svg>
      </Styled.TraySlot>
      <Styled.TraySlot $w={22}>
        <svg width="24" height="20" viewBox="0 0 24 20" fill="none" stroke="#fff" strokeWidth="1.500" strokeLinejoin="round">
          <path d="M1 6.500h4L12 1v18l-7-5.500H1z" />
          <path d="M15.500 6.500l7 7M22.500 6.500l-7 7" />
        </svg>
      </Styled.TraySlot>
      <Styled.TraySlot $w={52}>
        <svg width="26" height="18" viewBox="0 0 26 18" fill="none" stroke="#fff" strokeWidth="1.500">
          <rect x="1" y="2" width="20" height="14" rx="3.500" />
          <rect x="4" y="5" width="10" height="8" rx="1" fill="#fff" stroke="none" />
          <path d="M24 7v4" strokeWidth="2.500" />
        </svg>
      </Styled.TraySlot>
      <Styled.Clock>
        11:14 AM
        <br />
        4/11/2023
      </Styled.Clock>
      <Styled.Badge>13</Styled.Badge>
    </Styled.Tray>
  </Styled.Taskbar>
);

const App: FC = () => {
  return (
    <Styled.App>
      <GlobalStyle />
      <BrowserChrome />
      <SiteHeader />
      <Styled.Crumbs>
        <Styled.CrumbHome>Home</Styled.CrumbHome>
        <Styled.CrumbArrow>
          <FaChevronRight />
        </Styled.CrumbArrow>
        <Styled.CrumbCurrent>Incidents/Requests</Styled.CrumbCurrent>
      </Styled.Crumbs>
      <Styled.Main>
        <Styled.Scroll>
          <Styled.LeftColumn>
            <OpenPanel />
          </Styled.LeftColumn>
          <Styled.RightColumn>
            <Styled.Panel $cut>
              <Styled.Description>
                <Styled.DescriptionText>
                  {'Kindly find the attachment and  do the needful as user is\nfacing issue while login in teams,  Please look into this\nASAP.'}
                </Styled.DescriptionText>
              </Styled.Description>
              <Pager label="Rows 1 - 2 of 2" inset={21} />
            </Styled.Panel>
            <ClosedPanel />
          </Styled.RightColumn>
        </Styled.Scroll>
        <Styled.VScroll>
          <Styled.VArrow>
            <svg width="11" height="7" viewBox="0 0 11 7" fill="#555">
              <path d="M0 7h11L5.500 0z" />
            </svg>
          </Styled.VArrow>
          <Styled.VThumb />
          <Styled.VGap />
          <Styled.VArrow>
            <svg width="11" height="7" viewBox="0 0 11 7" fill="#555">
              <path d="M0 0h11L5.500 7z" />
            </svg>
          </Styled.VArrow>
        </Styled.VScroll>
      </Styled.Main>
      <Taskbar />
    </Styled.App>
  );
};

export default App;
